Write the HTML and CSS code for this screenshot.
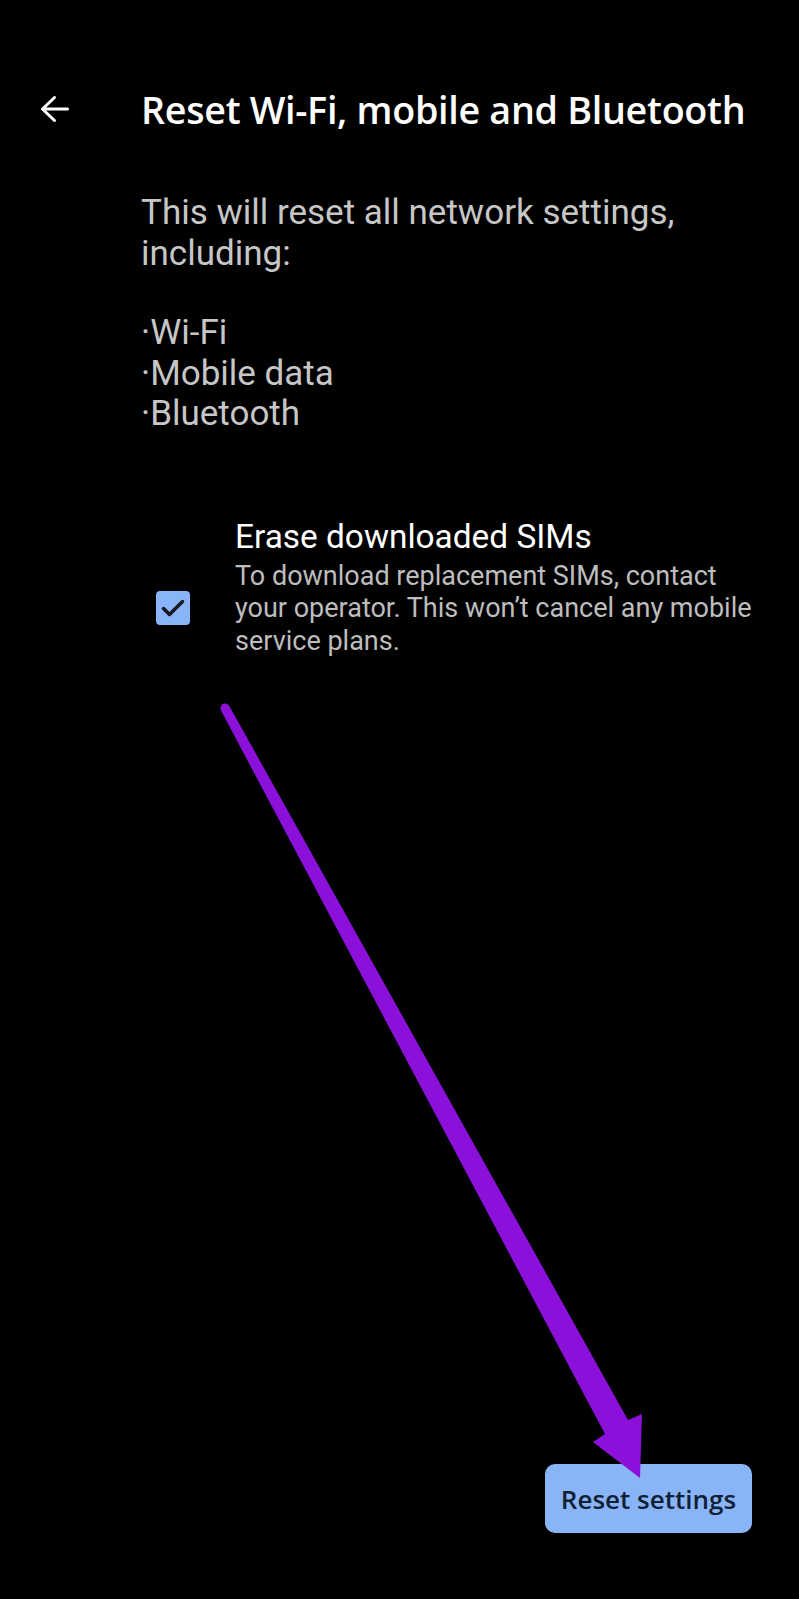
FILE: index.html
```html
<!DOCTYPE html>
<html lang="en">
<head>
<meta charset="utf-8">
<title>Reset Wi-Fi, mobile and Bluetooth</title>
<link rel="stylesheet" href="styles.css">
</head>
<body>
<div class="page">
  <header class="topbar">
    <svg class="back" viewBox="0 0 30 30" width="30" height="30" aria-hidden="true">
      <path d="M28.5 15H3.5M15.5 3.5L3.5 15L15.5 26.5" fill="none" stroke="#ffffff" stroke-width="3" stroke-linecap="round" stroke-linejoin="round"/>
    </svg>
    <h1 class="title">Reset Wi-Fi, mobile and Bluetooth</h1>
  </header>
  <main class="content">
    <p class="desc">This will reset all network settings, including:</p>
    <ul class="list">
      <li>·Wi-Fi</li>
      <li>·Mobile data</li>
      <li>·Bluetooth</li>
    </ul>
  </main>
  <section class="sim-row">
    <div class="checkbox">
      <svg viewBox="0 0 34 34" width="34" height="34" aria-hidden="true">
        <polyline points="7.5,17.5 13.5,23.5 26.5,10.5" fill="none" stroke="#15191f" stroke-width="3.5" stroke-linecap="round" stroke-linejoin="round"/>
      </svg>
    </div>
    <div class="sim-text">
      <div class="sim-title">Erase downloaded SIMs</div>
      <div class="sim-sub">To download replacement SIMs, contact your operator. This won’t cancel any mobile service plans.</div>
    </div>
  </section>
  <button class="reset-btn">Reset settings</button>
  <svg class="pointer" viewBox="0 0 799 1599" width="799" height="1599" aria-hidden="true">
    <polygon points="229,705.5 628,1420 642,1414 640,1478 593,1442 605,1434 221,710.5" fill="#8a10da"/>
    <circle cx="225" cy="708" r="4.5" fill="#8a10da"/>
  </svg>
</div>
</body>
</html>
```
FILE: styles.css
```css
* { box-sizing: border-box; }
html, body {
  margin: 0;
  padding: 0;
  background: #000000;
}
.page {
  position: relative;
  display: flex;
  flex-direction: column;
  height: 1599px;
  overflow: hidden;
  font-family: Roboto, "Liberation Sans", sans-serif;
}
.topbar {
  display: flex;
  align-items: center;
  height: 58px;
  margin-top: 80px;
  padding-left: 39px;
  gap: 72px;
}
.back { flex: none; }
.title {
  margin: 0;
  font-family: "Open Sans", Roboto, sans-serif;
  font-weight: 600;
  font-size: 37.7px;
  color: #ffffff;
  white-space: nowrap;
  letter-spacing: -0.3px;
}
.content {
  padding-left: 141px;
  padding-right: 40px;
}
.desc {
  margin: 54px 0 0 0;
  font-size: 35px;
  line-height: 41px;
  color: #c6c6c6;
  max-width: 580px;
}
.list {
  list-style: none;
  margin: 39px 0 0 0;
  padding: 0;
  font-size: 35px;
  line-height: 40.5px;
  color: #c6c6c6;
}
.sim-row {
  display: flex;
  align-items: flex-start;
  margin-top: 83px;
  padding-left: 156px;
  gap: 45px;
}
.checkbox {
  flex: none;
  width: 34px;
  height: 34px;
  margin-top: 73px;
  border-radius: 4px;
  background: #8ab4f8;
}
.checkbox svg { display: block; }
.sim-text {
  width: 538px;
}
.sim-title {
  font-size: 33.4px;
  line-height: 38px;
  color: #ffffff;
}
.sim-sub {
  font-size: 27px;
  line-height: 32.5px;
  color: #bdbdbd;
  margin-top: 4px;
}
.reset-btn {
  align-self: flex-end;
  margin-top: auto;
  margin-right: 47px;
  margin-bottom: 66px;
  width: 207px;
  height: 69px;
  border: none;
  border-radius: 10px;
  background: #8ab4f8;
  color: #0f2133;
  font-family: "Open Sans", Roboto, sans-serif;
  font-weight: 600;
  font-size: 26px;
  padding: 0;
}
.pointer {
  position: absolute;
  left: 0;
  top: 0;
  pointer-events: none;
}
```
